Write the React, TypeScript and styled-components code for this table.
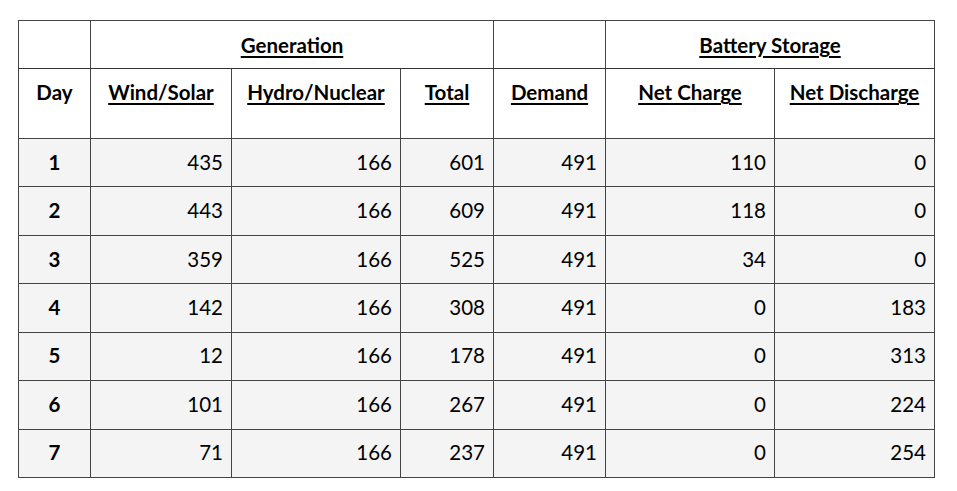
import styled, { createGlobalStyle } from 'styled-components';

const GlobalStyle = createGlobalStyle`
  html, body {
    margin: 0;
    padding: 0;
    background: #ffffff;
  }
  body {
    font-family: Lato, "Liberation Sans", sans-serif;
    color: #000;
  }
`;

interface DayRow {
  day: number;
  wind: number;
  hydro: number;
  total: number;
  demand: number;
  charge: number;
  discharge: number;
}

const rows: DayRow[] = [
  { day: 1, wind: 435, hydro: 166, total: 601, demand: 491, charge: 110, discharge: 0 },
  { day: 2, wind: 443, hydro: 166, total: 609, demand: 491, charge: 118, discharge: 0 },
  { day: 3, wind: 359, hydro: 166, total: 525, demand: 491, charge: 34, discharge: 0 },
  { day: 4, wind: 142, hydro: 166, total: 308, demand: 491, charge: 0, discharge: 183 },
  { day: 5, wind: 12, hydro: 166, total: 178, demand: 491, charge: 0, discharge: 313 },
  { day: 6, wind: 101, hydro: 166, total: 267, demand: 491, charge: 0, discharge: 224 },
  { day: 7, wind: 71, hydro: 166, total: 237, demand: 491, charge: 0, discharge: 254 },
];

const widths = [72, 141, 169, 93, 112, 169, 160];

const App = () => {
  return (
    <Page>
      <GlobalStyle />
      <Table>
        <colgroup>
          {widths.map((w, i) => (
            <col key={i} style={{ width: w }} />
          ))}
        </colgroup>
        <thead>
          <GroupRow>
            <GroupCell />
            <GroupCell colSpan={3}>
              <Underlined>Generation</Underlined>
            </GroupCell>
            <GroupCell />
            <GroupCell colSpan={2}>
              <Underlined>Battery Storage</Underlined>
            </GroupCell>
          </GroupRow>
          <LabelRow>
            <LabelCell>Day</LabelCell>
            <LabelCell>
              <Underlined>Wind/Solar</Underlined>
            </LabelCell>
            <LabelCell>
              <Underlined>Hydro/Nuclear</Underlined>
            </LabelCell>
            <LabelCell>
              <Underlined>Total</Underlined>
            </LabelCell>
            <LabelCell>
              <Underlined>Demand</Underlined>
            </LabelCell>
            <LabelCell>
              <Underlined>Net Charge</Underlined>
            </LabelCell>
            <LabelCell>
              <Underlined>Net Discharge</Underlined>
            </LabelCell>
          </LabelRow>
        </thead>
        <tbody>
          {rows.map((r) => (
            <DataRow key={r.day}>
              <DayCell>{r.day}</DayCell>
              <NumCell>{r.wind}</NumCell>
              <NumCell>{r.hydro}</NumCell>
              <NumCell>{r.total}</NumCell>
              <NumCell>{r.demand}</NumCell>
              <NumCell>{r.charge}</NumCell>
              <NumCell>{r.discharge}</NumCell>
            </DataRow>
          ))}
        </tbody>
      </Table>
    </Page>
  );
};

export default App;

const Page = styled.div`
  padding: 20px 0 0 18px;
`;

const Table = styled.table`
  border-collapse: collapse;
  table-layout: fixed;
  width: 916px;
  font-size: 20.5px;
  border: 1px solid #444;
`;

const GroupRow = styled.tr`
  height: 48px;
`;

const GroupCell = styled.th`
  border: 1px solid #444;
  border-bottom: 1.5px solid #333;
  background: #fff;
  font-weight: 700;
  text-align: center;
  vertical-align: middle;
  padding: 0 8px;
`;

const LabelRow = styled.tr`
  height: 70px;
`;

const LabelCell = styled.th`
  border: 1px solid #444;
  background: #fff;
  font-weight: 700;
  text-align: center;
  vertical-align: top;
  padding: 11px 4px 0;
  white-space: nowrap;
`;

const Underlined = styled.span`
  text-decoration: underline;
  text-decoration-thickness: 1.5px;
  text-underline-offset: 3px;
`;

const DataRow = styled.tr`
  height: 48.45px;
`;

const DataCell = styled.td`
  border: 1px solid #444;
  background: #f4f4f4;
  vertical-align: middle;
  padding: 0 8px 2px;
`;

const DayCell = styled(DataCell)`
  font-weight: 700;
  text-align: center;
`;

const NumCell = styled(DataCell)`
  text-align: right;
`;
